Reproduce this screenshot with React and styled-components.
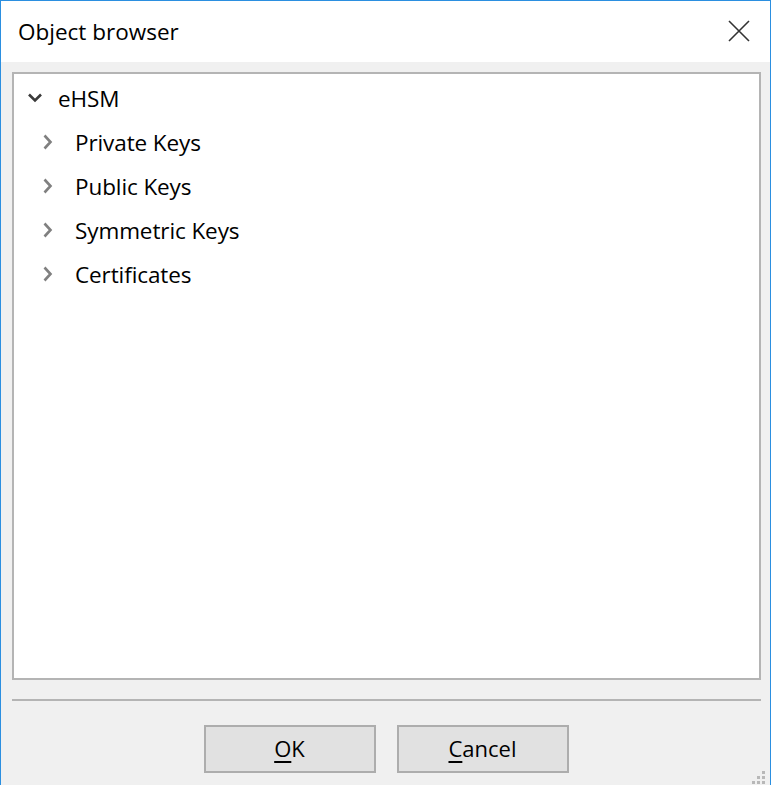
import React from "react";
import styled, { createGlobalStyle } from "styled-components";

const Global = createGlobalStyle`
  html, body { margin: 0; padding: 0; background: #ffffff; }
  body { font-family: "Open Sans", "Noto Sans", sans-serif; color: #000; }
`;

const Window = styled.div`
  box-sizing: border-box;
  width: 771px;
  height: 785px;
  border: 1px solid #2b8fe0;
  border-bottom: none;
  background: #f0f0f0;
  display: flex;
  flex-direction: column;
  position: relative;
`;

const TitleBar = styled.div`
  height: 61px;
  background: #ffffff;
  display: flex;
  align-items: center;
  justify-content: space-between;
  padding: 0 20px 0 17px;
  flex-shrink: 0;
`;

const Title = styled.span`
  font-size: 22.5px;
  margin-top: 0;
`;

const CloseButton = styled.button`
  border: none;
  background: transparent;
  padding: 0;
  width: 22px;
  height: 22px;
  display: flex;
  align-items: center;
  justify-content: center;
  margin-top: -1px;
`;

const Body = styled.div`
  flex: 1;
  display: flex;
  flex-direction: column;
  padding: 10px 9px 10px 11px;
`;

const TreePanel = styled.div`
  box-sizing: border-box;
  height: 608px;
  background: #ffffff;
  border: 2px solid #b4b4b4;
  padding: 2px 0 0 0;
`;

const Row = styled.div`
  height: 44px;
  display: flex;
  align-items: center;
  padding-left: ${(p) => p.$indent}px;
  font-size: 22.5px;
  letter-spacing: -0.1px;
`;

const Toggle = styled.span`
  width: ${(p) => p.$width}px;
  display: flex;
  align-items: center;
  flex-shrink: 0;
`;

const Separator = styled.div`
  height: 2px;
  background: #b4b4b4;
  margin-top: 19px;
`;

const ButtonBar = styled.div`
  display: flex;
  justify-content: center;
  gap: 21px;
  margin-top: 24px;
  padding-right: 1px;
`;

const DialogButton = styled.button`
  box-sizing: border-box;
  width: 172px;
  height: 48px;
  background: #e1e1e1;
  border: 2px solid #adadad;
  font-family: inherit;
  font-size: 22px;
  color: #000;
  padding: 0 0 2px 0;
  u { text-decoration-thickness: 2px; text-underline-offset: 4px; }
`;

const Grip = styled.svg`
  position: absolute;
  right: 4px;
  bottom: 1px;
`;

const ChevronDown = () => (
  <svg width="16" height="12" viewBox="0 0 16 12">
    <path d="M2 2.5 L8 8.5 L14 2.5" fill="none" stroke="#3a3a3a" strokeWidth="2.6" />
  </svg>
);

const ChevronRight = () => (
  <svg width="12" height="18" viewBox="0 0 12 18">
    <path d="M2.5 2.5 L8.5 9 L2.5 15.5" fill="none" stroke="#808080" strokeWidth="2.6" />
  </svg>
);

const children = ["Private Keys", "Public Keys", "Symmetric Keys", "Certificates"];

export default function App() {
  return (
    <>
      <Global />
      <Window>
        <TitleBar>
          <Title>Object browser</Title>
          <CloseButton aria-label="Close">
            <svg width="22" height="22" viewBox="0 0 22 22">
              <path d="M1 1 L21 21 M21 1 L1 21" stroke="#333" strokeWidth="1.6" />
            </svg>
          </CloseButton>
        </TitleBar>
        <Body>
          <TreePanel>
            <Row $indent={13}>
              <Toggle $width={31}>
                <ChevronDown />
              </Toggle>
              eHSM
            </Row>
            {children.map((name) => (
              <Row key={name} $indent={28}>
                <Toggle $width={33}>
                  <ChevronRight />
                </Toggle>
                {name}
              </Row>
            ))}
          </TreePanel>
          <Separator />
          <ButtonBar>
            <DialogButton>
              <u>O</u>K
            </DialogButton>
            <DialogButton>
              <u>C</u>ancel
            </DialogButton>
          </ButtonBar>
        </Body>
        <Grip width="16" height="16" viewBox="0 0 16 16">
          <g fill="#b8b8b8">
            <rect x="12" y="3" width="3" height="3" />
            <rect x="7" y="8" width="3" height="3" />
            <rect x="12" y="8" width="3" height="3" />
            <rect x="2" y="13" width="3" height="3" />
            <rect x="7" y="13" width="3" height="3" />
            <rect x="12" y="13" width="3" height="3" />
          </g>
        </Grip>
      </Window>
    </>
  );
}
